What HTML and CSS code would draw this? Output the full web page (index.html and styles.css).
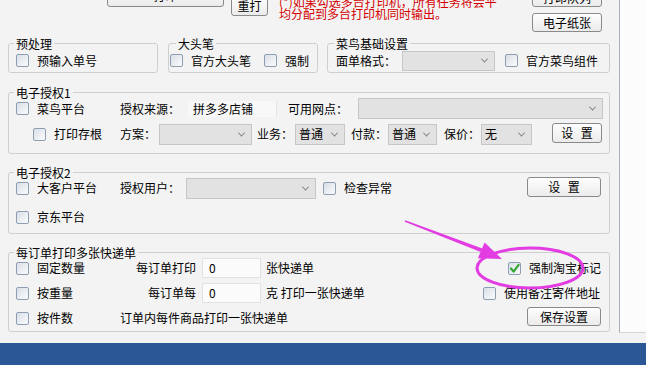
FILE: index.html
```html
<!DOCTYPE html>
<html lang="zh-CN">
<head>
<meta charset="utf-8">
<title>打印设置</title>
<link rel="stylesheet" href="styles.css">
</head>
<body>
<div class="window">
  <div class="content">
    <div class="main">
      <div class="topbar">
        <button class="btn btn-cut">打印</button>
        <button class="btn btn-reprint">重打</button>
        <p class="notice">(*)如果勾选多台打印机，所有任务将会平<br>均分配到多台打印机同时输出。</p>
        <div class="topbtns">
          <button class="btn btn-queue">打印队列</button>
          <button class="btn btn-paper">电子纸张</button>
        </div>
      </div>

      <div class="grp-row">
        <fieldset class="grp grp-pre"><legend>预处理</legend>
          <div class="line"><span class="cb"></span><span class="lbl">预输入单号</span></div>
        </fieldset>
        <fieldset class="grp grp-pen"><legend>大头笔</legend>
          <div class="line"><span class="cb"></span><span class="lbl">官方大头笔</span><span class="cb cb-force"></span><span class="lbl">强制</span></div>
        </fieldset>
        <fieldset class="grp grp-cn"><legend>菜鸟基础设置</legend>
          <div class="line"><span class="txt">面单格式：</span><span class="sel sel-format"><i class="chev"></i></span><span class="cb cb-comp"></span><span class="lbl">官方菜鸟组件</span></div>
        </fieldset>
      </div>

      <fieldset class="grp grp-wide grp-auth1"><legend>电子授权1</legend>
        <div class="line a1-r1">
          <span class="cell"><span class="cb"></span><span class="lbl">菜鸟平台</span></span>
          <span class="txt">授权来源：</span>
          <span class="ro">拼多多店铺</span>
          <span class="txt t-net">可用网点：</span>
          <span class="sel sel-net"><i class="chev"></i></span>
        </div>
        <div class="line a1-r2">
          <span class="cell cell-indent"><span class="cb"></span><span class="lbl">打印存根</span></span>
          <span class="txt">方案：</span>
          <span class="sel sel-plan"><i class="chev"></i></span>
          <span class="txt t-biz">业务：</span>
          <span class="sel sel-biz">普通<i class="chev"></i></span>
          <span class="txt t-pay">付款：</span>
          <span class="sel sel-pay">普通<i class="chev"></i></span>
          <span class="txt t-ins">保价：</span>
          <span class="sel sel-ins">无<i class="chev"></i></span>
          <button class="btn btn-set1">设 置</button>
        </div>
      </fieldset>

      <fieldset class="grp grp-wide grp-auth2"><legend>电子授权2</legend>
        <div class="line a2-r1">
          <span class="cell"><span class="cb"></span><span class="lbl">大客户平台</span></span>
          <span class="txt">授权用户：</span>
          <span class="sel sel-user"><i class="chev"></i></span>
          <span class="cb cb-check"></span><span class="lbl">检查异常</span>
          <button class="btn btn-set2">设 置</button>
        </div>
        <div class="line a2-r2">
          <span class="cell"><span class="cb"></span><span class="lbl">京东平台</span></span>
        </div>
      </fieldset>

      <fieldset class="grp grp-wide grp-multi"><legend>每订单打印多张快递单</legend>
        <div class="multi-grid">
          <div class="line">
            <span class="cell"><span class="cb"></span><span class="lbl">固定数量</span></span>
            <span class="txt t-right">每订单打印</span>
            <span class="num">0</span>
            <span class="txt">张快递单</span>
          </div>
          <div class="line line-right r-mark">
            <span class="cb cb-on"><svg viewBox="0 0 13 13" width="13" height="13"><path d="M3 6.5 L5.6 9.6 L10.6 2.8" fill="none" stroke="#35a535" stroke-width="2.2" stroke-linecap="round" stroke-linejoin="round"/></svg></span><span class="lbl">强制淘宝标记</span>
          </div>
          <div class="line">
            <span class="cell"><span class="cb"></span><span class="lbl">按重量</span></span>
            <span class="txt t-right">每订单每</span>
            <span class="num">0</span>
            <span class="txt">克 打印一张快递单</span>
          </div>
          <div class="line line-right r-addr">
            <span class="cb"></span><span class="lbl">使用备注寄件地址</span>
          </div>
          <div class="line">
            <span class="cell"><span class="cb"></span><span class="lbl">按件数</span></span>
            <span class="txt">订单内每件商品打印一张快递单</span>
          </div>
          <div class="line line-right r-save">
            <button class="btn btn-save">保存设置</button>
          </div>
        </div>
      </fieldset>
    </div>
    <div class="side"></div>
  </div>
  <div class="footer"></div>

  <svg class="annot" viewBox="0 0 646 365" width="646" height="365">
    <ellipse cx="530" cy="268" rx="53" ry="20" fill="none" stroke="#e23ce2" stroke-width="3"/>
    <polygon points="405.3,220.3 482.3,248.5 480.7,252.1 404.7,221.7" fill="#e23ce2"/>
    <polygon points="502,259 484.6,242.4 477.9,258.2" fill="#e23ce2"/>
  </svg>
</div>
</body>
</html>
```

FILE: styles.css
```css
html, body {
  margin: 0;
  padding: 0;
}

body {
  width: 646px;
  height: 365px;
  overflow: hidden;
  background: #f3f3f3;
  font-family: "Noto Sans CJK SC", "Noto Sans", sans-serif;
  font-size: 12px;
  line-height: 14px;
  color: #000;
}

.window {
  position: relative;
  width: 646px;
  height: 365px;
  display: flex;
  flex-direction: column;
}

.content {
  display: flex;
  height: 343px;
}

.main {
  width: 619px;
  flex: none;
}

.side {
  flex: 1;
  height: 332px;
  background: #fcfcfc;
  border-left: 1px solid #a9b0bd;
  border-bottom: 1px solid #d6d6d6;
}

.footer {
  height: 22px;
  background: #2c5797;
}

/* ---------- top strip ---------- */
.topbar {
  display: flex;
  align-items: flex-start;
  height: 37px;
}

.btn {
  font-family: inherit;
  font-size: 12px;
  line-height: 14px;
  color: #000;
  padding: 0;
  border: 1px solid #8a8a8a;
  border-radius: 3px;
  background: linear-gradient(#fefefe, #ebebeb);
  box-sizing: border-box;
  flex: none;
}

.btn-cut {
  margin-left: 107px;
  margin-top: -16px;
  width: 117px;
  height: 23px;
}

.btn-reprint {
  margin-left: 7px;
  margin-top: -4px;
  width: 37px;
  height: 20px;
}

.notice {
  margin: -4px 0 0 11px;
  line-height: 12px;
  color: #d40000;
  white-space: nowrap;
}

.topbtns {
  margin-left: auto;
  margin-right: 17px;
  margin-top: -12px;
  display: flex;
  flex-direction: column;
  gap: 6px;
}

.btn-queue,
.btn-paper {
  width: 70px;
  height: 19px;
}

/* ---------- group boxes ---------- */
.grp {
  margin: 0;
  border: 1px solid #cfcfcf;
  border-radius: 3px;
  padding: 0 6px 1px 7px;
  box-sizing: border-box;
  min-width: 0;
}

.grp legend {
  padding: 0 2px;
  margin-left: -2px;
  line-height: 13px;
  font-size: 12px;
}

.grp-row {
  display: flex;
  padding-left: 8px;
}

.grp-pre {
  width: 150px;
}

.grp-pen {
  width: 150px;
  margin-left: 10px;
  padding-left: 1px;
}

.grp-pen legend {
  margin-left: 6px;
}

.grp-cn {
  width: 283px;
  margin-left: 9px;
  padding-left: 8px;
}

.grp-wide {
  width: 602px;
  margin-left: 8px;
}

.line {
  display: flex;
  align-items: center;
  height: 21px;
  white-space: nowrap;
}

.cell {
  display: flex;
  align-items: center;
  width: 104px;
  flex: none;
}

.cell-indent {
  padding-left: 17px;
  box-sizing: border-box;
}

.txt {
  flex: none;
}

.lbl {
  flex: none;
  margin-left: 8px;
}

/* checkbox */
.cb {
  width: 13px;
  height: 13px;
  flex: none;
  box-sizing: border-box;
  border: 1px solid #8d9db2;
  border-radius: 2px;
  background: linear-gradient(135deg, #d9dfe7, #fbfbfc);
  position: relative;
}

.cb svg {
  display: block;
  margin: -1px;
}

.cb-force {
  margin-left: 13px;
}

.cb-comp {
  margin-left: 10px;
}

.cb-check {
  margin-left: 7px;
}

/* select boxes */
.sel {
  display: flex;
  align-items: center;
  box-sizing: border-box;
  height: 21px;
  padding-left: 3px;
  background: #e2e2e2;
  border: 1px solid #c6c6c6;
  flex: none;
}

.chev {
  margin-left: auto;
  margin-right: 7px;
  width: 4px;
  height: 4px;
  border-right: 1px solid #7a7a7a;
  border-bottom: 1px solid #7a7a7a;
  transform: rotate(45deg) translate(-1px, -1px);
}

.sel-format {
  width: 93px;
  height: 20px;
  margin-left: 6px;
}

.ro {
  width: 89px;
  height: 16px;
  margin-left: 8px;
  padding-left: 5px;
  box-sizing: border-box;
  background: #f8f8f8;
  border-right: 1px solid #e4e4e4;
  display: flex;
  align-items: center;
  flex: none;
}

.t-net {
  margin-left: 11px;
}

.sel-net {
  flex: 1;
  margin-left: 10px;
}

/* auth 1 */
.a1-r1 {
  margin-top: -1px;
}

.a1-r2 {
  margin-top: 4px;
  height: 22px;
}

.grp-auth1 {
  margin-top: 13px;
  padding-bottom: 8px;
}

.sel-plan {
  width: 93px;
  margin-left: 3px;
}

.t-biz { margin-left: 5px; }
.sel-biz { width: 50px; margin-left: 2px; }
.t-pay { margin-left: 6px; }
.sel-pay { width: 49px; margin-left: 1px; }
.t-ins { margin-left: 7px; }
.sel-ins { width: 51px; margin-left: 1px; }

.btn-set1 {
  margin-left: auto;
  margin-right: 1px;
  width: 50px;
  height: 20px;
  margin-top: -2px;
  word-spacing: 5px;
}

/* auth 2 */
.grp-auth2 {
  margin-top: 12px;
  padding-bottom: 5px;
}

.a2-r1 {
  margin-top: -2px;
  height: 22px;
}

.a2-r2 {
  margin-top: 7px;
  height: 22px;
}

.sel-user {
  width: 130px;
  margin-left: 6px;
}

.btn-set2 {
  margin-left: auto;
  margin-right: 2px;
  width: 74px;
  height: 20px;
  margin-top: -3px;
  word-spacing: 5px;
}

/* multi */
.grp-multi {
  margin-top: 12px;
  padding-bottom: 2px;
}

.multi-grid {
  display: grid;
  grid-template-columns: 1fr auto;
  grid-auto-rows: 22px;
  row-gap: 3px;
  margin-top: -2px;
}

.multi-grid .line {
  height: 22px;
}

.t-right {
  width: 76px;
  text-align: right;
}

.num {
  width: 59px;
  height: 20px;
  margin-left: 6px;
  margin-right: 5px;
  padding-left: 6px;
  box-sizing: border-box;
  background: #fbfbfb;
  border: 1px solid #e2e2e2;
  display: flex;
  align-items: center;
  flex: none;
}

.line-right {
  justify-content: flex-end;
}

.r-mark { margin-right: 2px; }
.r-addr { margin-right: 3px; }
.r-save { margin-right: 2px; }

.btn-save {
  width: 74px;
  height: 19px;
  margin-top: -3px;
}

/* annotation overlay */
.annot {
  position: absolute;
  left: 0;
  top: 0;
  pointer-events: none;
}
```
